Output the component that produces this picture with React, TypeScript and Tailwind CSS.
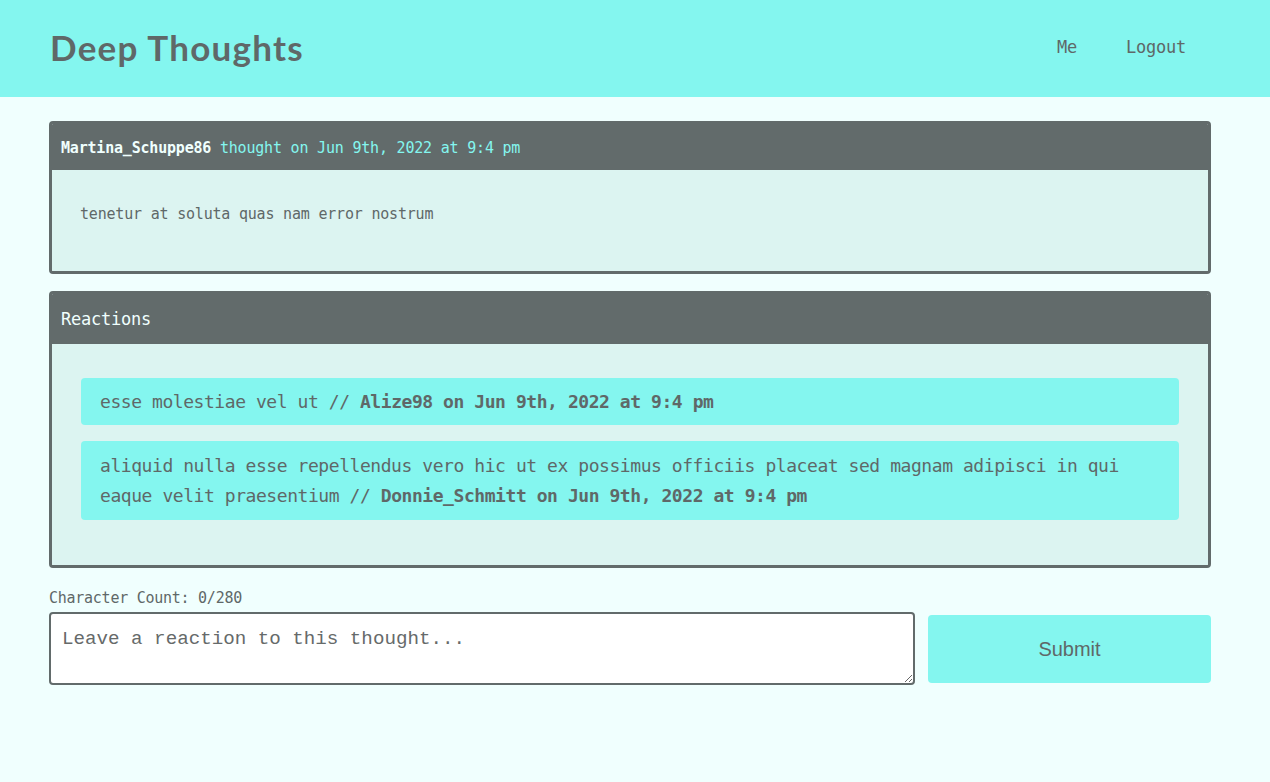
import React from "react";

export default function App() {
  return (
    <div className="min-h-[782px] bg-[#f0fffe] text-[#5f6868] font-['DejaVu_Sans_Mono',monospace]">
      <header className="h-[97px] bg-[#84f6ef] flex items-center justify-between pl-[50px] pr-[84px]">
        <h1 className="font-['Lato',sans-serif] font-bold text-[35px] text-[#5f6868] tracking-[1.25px] mt-[-3px]">
          Deep Thoughts
        </h1>
        <nav className="flex items-center gap-[49px] text-[17px] tracking-[-0.23px] mt-[-2px]">
          <a>Me</a>
          <a>Logout</a>
        </nav>
      </header>

      <main className="pl-[49px] pr-[59px] pt-[24px] flex flex-col">
        <section className="border-[3px] border-[#626b6b] rounded-[4px] overflow-hidden">
          <div className="bg-[#626b6b] h-[46px] flex items-center pl-[9px] text-[15px] tracking-[-0.2px] pt-[2px]">
            <span className="font-bold text-[#f0fffe]">Martina_Schuppe86</span>
            <span className="text-[#84f6ef]">&nbsp;thought on Jun 9th, 2022 at 9:4 pm</span>
          </div>
          <div className="bg-[#dcf4f1] h-[101px] pl-[28px] pt-[33px] text-[15px] tracking-[-0.2px]">
            <p>tenetur at soluta quas nam error nostrum</p>
          </div>
        </section>

        <section className="mt-[17px] border-[3px] border-[#626b6b] rounded-[4px] overflow-hidden">
          <div className="bg-[#626b6b] h-[50px] flex items-center pl-[9px] pt-[2px] text-[17px] tracking-[-0.23px] text-[#f0fffe]">
            Reactions
          </div>
          <div className="bg-[#dcf4f1] px-[29px] pt-[34px] pb-[45px] flex flex-col gap-[16px] text-[18px] tracking-[-0.44px] leading-[30px]">
            <p className="bg-[#84f6ef] rounded-[4px] px-[19px] py-[8.5px]">
              esse molestiae vel ut // <span className="font-bold">Alize98 on Jun 9th, 2022 at 9:4 pm</span>
            </p>
            <p className="bg-[#84f6ef] rounded-[4px] px-[19px] py-[9.5px]">
              aliquid nulla esse repellendus vero hic ut ex possimus officiis placeat sed magnam adipisci in qui eaque velit praesentium //{" "}
              <span className="font-bold">Donnie_Schmitt on Jun 9th, 2022 at 9:4 pm</span>
            </p>
          </div>
        </section>

        <p className="mt-[21px] text-[15px] tracking-[-0.26px] leading-[18px]">Character Count: 0/280</p>
        <form className="mt-[5px] flex items-center gap-[13px]" onSubmit={(e) => e.preventDefault()}>
          <textarea
            placeholder="Leave a reaction to this thought..."
            className="w-[866px] h-[73px] shrink-0 bg-white border-2 border-[#626b6b] rounded-[4px] px-[11px] pt-[14px] pb-[8px] font-['Liberation_Mono',monospace] text-[19.2px] leading-[22px] placeholder:text-[#666a6a] outline-none"
          />
          <button
            type="submit"
            className="flex-1 h-[68px] bg-[#84f6ef] rounded-[4px] text-[20px] font-['Liberation_Sans',Arial,sans-serif] text-[#5f6868]"
          >
            Submit
          </button>
        </form>
      </main>
    </div>
  );
}
